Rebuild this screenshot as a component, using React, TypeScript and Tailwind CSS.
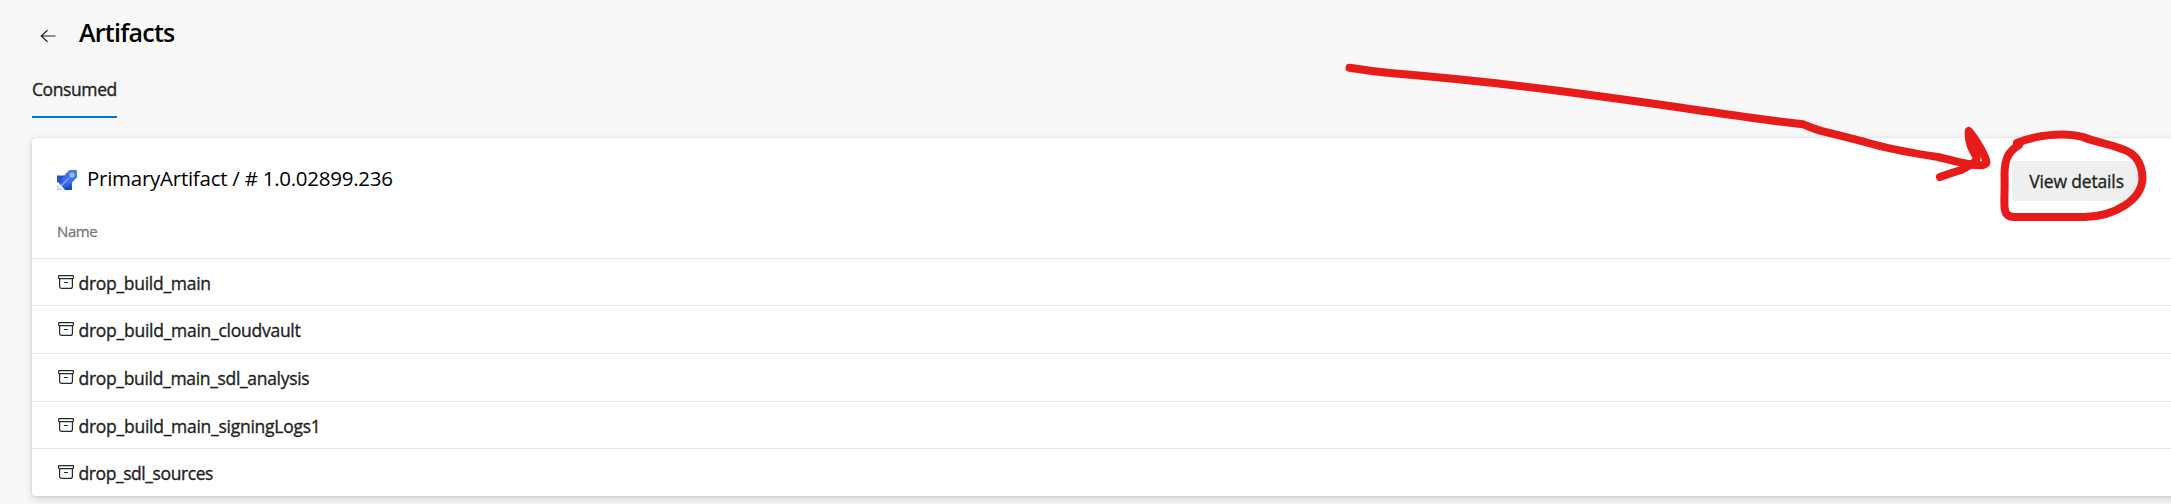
const artifacts = [
  { name: 'drop_build_main', spacing: 'tracking-[-0.28px]' },
  { name: 'drop_build_main_cloudvault', spacing: 'tracking-[-0.26px]' },
  { name: 'drop_build_main_sdl_analysis', spacing: 'tracking-[-0.32px]' },
  { name: 'drop_build_main_signingLogs1', spacing: 'tracking-[-0.26px]' },
  { name: 'drop_sdl_sources', spacing: 'tracking-[-0.42px]' },
];

function BackIcon() {
  return (
    <svg className="block h-4 w-4" viewBox="0 0 16 16" fill="none" stroke="#222" strokeWidth="1.2">
      <path d="M7.5 2.2 1.2 8l6.3 5.8M1.2 8h14.3" />
    </svg>
  );
}

function RocketIcon() {
  return (
    <svg className="block h-5 w-5 shrink-0" viewBox="0 0 20 20">
      <defs>
        <linearGradient id="body" x1="1" y1="0" x2="0" y2="1">
          <stop offset="0" stopColor="#5181f2" />
          <stop offset=".6" stopColor="#376be6" />
          <stop offset="1" stopColor="#2459d0" />
        </linearGradient>
        <linearGradient id="fin" x1="0" y1="0" x2="0" y2="1">
          <stop offset="0" stopColor="#2f67dc" />
          <stop offset="1" stopColor="#1746b5" />
        </linearGradient>
      </defs>
      <path d="M0 5.5h7.5L3 13 0 12.2Z" fill="#2454c5" />
      <path d="m14.8 10-9 5.2.2 2.2L8 20h7v-1Z" fill="url(#fin)" />
      <path d="M12.5 0H19q1 0 1 1v6.2L15.5 12 7 18.5 2 13.2 8 4.5Z" fill="url(#body)" />
      <circle cx="15" cy="5" r="2.6" fill="#9dbdfb" />
      <path d="m11.5 8.5-6.8 6.8" stroke="#86a8f5" strokeWidth="1.6" strokeLinecap="round" />
      <path d="M0 15.2h1.5v3.1H5V20H0Z" fill="#bdd0f7" />
    </svg>
  );
}

function BoxIcon() {
  return (
    <svg className="block h-[14px] w-4 shrink-0" viewBox="0 0 16 14" fill="none" stroke="#292929" strokeWidth="1.2">
      <rect x=".6" y=".6" width="14.8" height="3" rx=".5" />
      <path d="M1.6 3.8v7.6a2 2 0 0 0 2 2h8.8a2 2 0 0 0 2-2V3.8M6 7.5h4" />
    </svg>
  );
}

function Annotation() {
  return (
    <svg
      className="pointer-events-none absolute top-0 left-0 h-[504px] w-[2171px]"
      viewBox="0 0 2171 504"
      fill="none"
      stroke="#e81b1b"
      strokeWidth="8"
      strokeLinecap="round"
      strokeLinejoin="round"
    >
      <path d="M1349.500 67.800C1363 70 1377 71.800 1390 73Q1480 80.500 1560 91T1700 110.500Q1780 122 1803 124.300C1809 126.500 1814 129 1822 131.200Q1850 138 1874 144.500T1938 157C1950 160 1959 162.500 1969 164.200C1983 166.500 1988 165 1986 160C1984 153 1975 138 1968.700 131C1968 142 1971 149 1976 156C1979 162 1970 165 1961 170Q1948 174 1940 177" />
      <path d="M2019 145C2009 151 2004.500 158 2004.500 175C2005 188 2004 198 2004.500 207C2005 214 2008 217 2014 217H2085C2115 216 2142 200 2142.500 178C2142 163 2135 153 2122 149C2109 144 2095 142 2083 137C2064 132 2035 135 2017 143" />
    </svg>
  );
}

export default function App() {
  return (
    <div className="relative h-[504px] w-full overflow-hidden bg-[#f8f8f8] font-['Open_Sans','Noto_Sans',sans-serif] text-[#1f1f1f]">
      <header className="flex h-[70px] items-start pl-10">
        <div className="pt-7">
          <BackIcon />
        </div>
        <h1 className="ml-[23px] pt-[14px] text-[25px] leading-9 font-semibold tracking-[-0.74px] whitespace-nowrap text-black">Artifacts</h1>
      </header>
      <nav className="flex pl-8">
        <div className="h-12 w-[85px] border-b-2 border-[#0078d4] pt-[5px] text-[17.500px] leading-7 tracking-[-0.4px] whitespace-nowrap [-webkit-text-stroke:0.35px_currentColor]">
          Consumed
        </div>
      </nav>
      <main className="pt-5 pl-8">
        <section className="flex h-[358px] w-[2160px] flex-col rounded-[4px] bg-white shadow-[0_3px_8px_rgba(0,0,0,0.17),0_0_2px_rgba(0,0,0,0.12)]">
          <div className="flex h-[75px] items-start pl-[25px]">
            <div className="pt-8">
              <RocketIcon />
            </div>
            <h2 className="ml-[10px] w-[1925px] shrink-0 pt-6 text-[20.500px] leading-8 tracking-[-0.26px] whitespace-nowrap text-black">
              PrimaryArtifact / # 1.0.02899.236
            </h2>
            <button className="mt-[23px] h-10 w-[129px] shrink-0 rounded-[2px] bg-[#efefef] text-[17.500px] tracking-[-0.15px] whitespace-nowrap [-webkit-text-stroke:0.35px_currentColor]">
              View details
            </button>
          </div>
          <div className="h-[45px] pt-[6px] pl-[25px] text-[15px] leading-6 tracking-[-0.4px] text-[#777] [-webkit-text-stroke:0.3px_currentColor]">Name</div>
          <ul>
            {artifacts.map(({ name, spacing }) => (
              <li key={name} className="flex h-[47.700px] items-start gap-[4.500px] border-t border-[#e6e6e6] pl-[26px]">
                <div className="pt-4">
                  <BoxIcon />
                </div>
                <span className={`pt-[10px] text-[17.500px] leading-7 whitespace-nowrap [-webkit-text-stroke:0.35px_currentColor] ${spacing}`}>{name}</span>
              </li>
            ))}
          </ul>
        </section>
      </main>
      <Annotation />
    </div>
  );
}
